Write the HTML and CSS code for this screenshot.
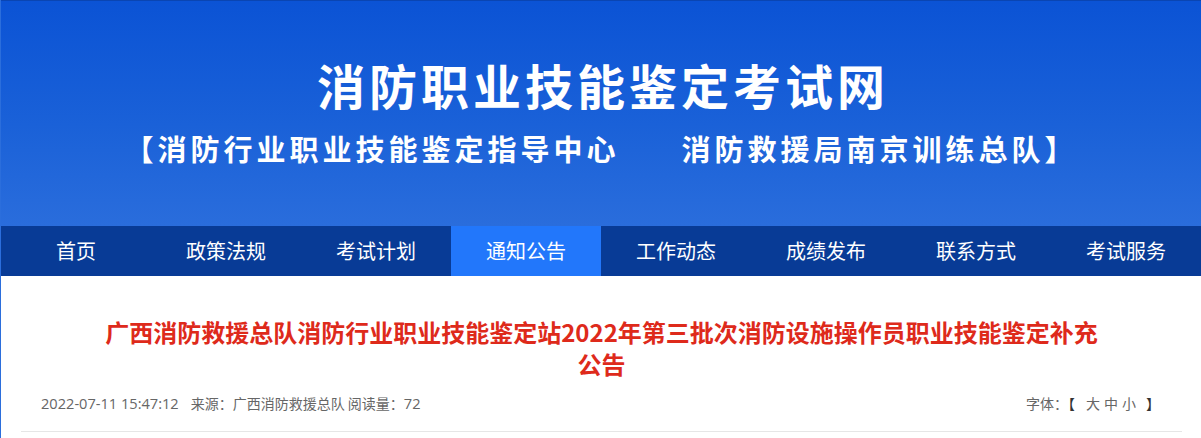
FILE: index.html
```html
<!DOCTYPE html>
<html lang="zh-CN">
<head>
<meta charset="utf-8">
<title>消防职业技能鉴定考试网</title>
<link rel="stylesheet" href="styles.css">
</head>
<body>
<div class="page">
  <header class="banner">
    <h1 class="site-name">消防职业技能鉴定考试网</h1>
    <p class="site-sub">【消防行业职业技能鉴定指导中心<span class="sub-gap"></span>消防救援局南京训练总队】</p>
  </header>
  <nav class="nav">
    <a class="nav-item" href="#">首页</a>
    <a class="nav-item" href="#">政策法规</a>
    <a class="nav-item" href="#">考试计划</a>
    <a class="nav-item active" href="#">通知公告</a>
    <a class="nav-item" href="#">工作动态</a>
    <a class="nav-item" href="#">成绩发布</a>
    <a class="nav-item" href="#">联系方式</a>
    <a class="nav-item" href="#">考试服务</a>
  </nav>
  <main class="article">
    <h2 class="article-title">广西消防救援总队消防行业职业技能鉴定站2022年第三批次消防设施操作员职业技能鉴定补充<br>公告</h2>
    <div class="meta">
      <div class="meta-info"><span class="num">2022-07-11 15:47:12</span><span class="src">来源：广西消防救援总队</span> 阅读量：<span class="num">72</span></div>
      <div class="font-size">字体：<span class="br open">【</span><a href="#">大</a><a href="#">中</a><a href="#">小</a><span class="br close">】</span></div>
    </div>
  </main>
</div>
</body>
</html>
```
FILE: styles.css
```css
html, body {
  margin: 0;
  padding: 0;
  background: #ffffff;
}
body {
  font-family: "Noto Sans CJK SC", "Noto Sans", sans-serif;
}
.page {
  width: 1200px;
  border-left: 1px solid #2b6edc;
  min-height: 438px;
}
.banner {
  box-sizing: border-box;
  height: 226px;
  border-top: 1px solid #0a45b2;
  background: linear-gradient(to bottom, #0b53d5 0%, #1a61d8 55%, #2a6ddc 100%);
  padding-top: 59px;
  text-align: center;
  color: #ffffff;
}
.site-name {
  margin: 0;
  font-size: 48px;
  line-height: 48px;
  font-weight: 700;
  letter-spacing: 4px;
  padding-left: 4px;
}
.site-sub {
  margin: 25px 0 0;
  font-size: 29px;
  line-height: 30px;
  font-weight: 700;
  letter-spacing: 4px;
}
.sub-gap {
  display: inline-block;
  width: 62px;
}
.nav {
  display: grid;
  grid-template-columns: repeat(8, 150px);
  height: 50px;
  background: #083b96;
}
.nav-item {
  display: flex;
  align-items: center;
  justify-content: center;
  color: #ffffff;
  text-decoration: none;
  font-size: 20px;
  padding-bottom: 1px;
}
.nav-item.active {
  background: #2277fb;
}
.article {
  margin: 0 19px 0 20px;
  padding: 0 20px 18px;
  border-bottom: 1px solid #e6e6e6;
}
.article-title {
  margin: 0;
  padding-top: 40px;
  text-align: center;
  font-size: 24px;
  line-height: 32px;
  font-weight: 700;
  color: #de2a1b;
}
.meta {
  display: flex;
  justify-content: space-between;
  align-items: center;
  margin-top: 13px;
  font-size: 14px;
  line-height: 20px;
  color: #666666;
}
.num {
  font-family: "Open Sans", "Noto Sans CJK SC", sans-serif;
  font-size: 14.6px;
}
.src {
  margin-left: 12px;
}
.font-size {
  color: #666666;
}
.font-size a {
  color: #666666;
  text-decoration: none;
  margin: 0 2px;
}
.font-size .br {
  color: #333333;
}
.font-size .open {
  margin-right: 9px;
}
.font-size .close {
  margin-left: 8px;
  margin-right: 2px;
}
```
